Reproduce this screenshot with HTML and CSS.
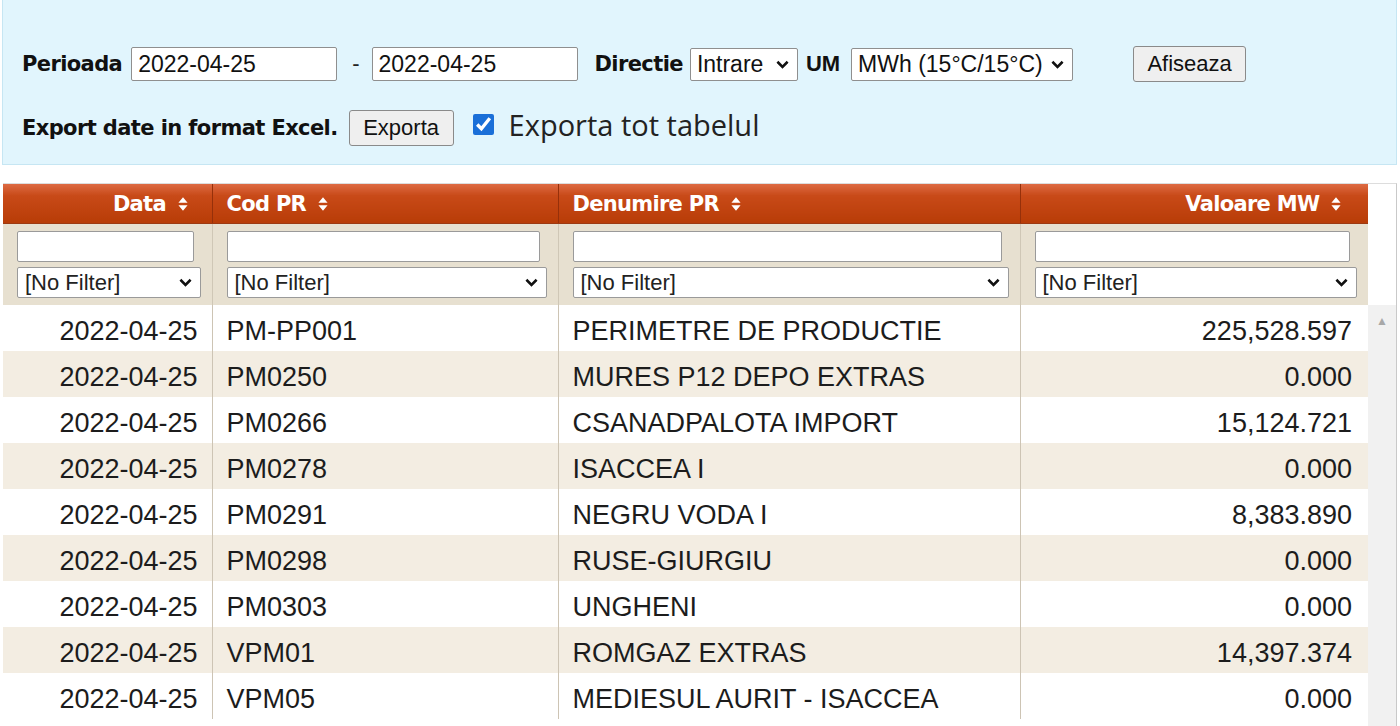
FILE: index.html
```html
<!DOCTYPE html>
<html lang="ro">
<head>
    <meta charset="UTF-8">
    <meta name="viewport" content="width=device-width, initial-scale=1.0">
    <title>Puncte de intrare</title>
    <link rel="stylesheet" href="styles.css">
</head>
<body>

    <div class="panel">
        <div class="panel-row">
            <label class="lbl">Perioada</label>
            <input type="text" class="date" value="2022-04-25">
            <span class="dash">-</span>
            <input type="text" class="date" value="2022-04-25">
            <label class="lbl lbl-dir">Directie</label>
            <select class="sel sel-dir">
                <option>Intrare</option>
                <option>Iesire</option>
            </select>
            <label class="lbl lbl-um">UM</label>
            <select class="sel sel-um">
                <option>MWh (15°C/15°C)</option>
                <option>mc</option>
            </select>
            <button class="btn btn-show">Afiseaza</button>
        </div>
        <div class="panel-row">
            <label class="lbl">Export date in format Excel.</label>
            <button class="btn btn-export">Exporta</button>
            <input type="checkbox" class="chk" id="all" checked>
            <label for="all" class="chk-text">Exporta tot tabelul</label>
        </div>
    </div>

    <div class="grid">
        <table class="grid-head">
            <colgroup>
                <col class="c1"><col class="c2"><col class="c3"><col class="c4">
            </colgroup>
            <tr class="titles">
                <th class="num">Data <svg class="sort" viewBox="0 0 10 14"><path d="M5 1 9 6H1zM5 13 1 8h8z"/></svg></th>
                <th>Cod PR <svg class="sort" viewBox="0 0 10 14"><path d="M5 1 9 6H1zM5 13 1 8h8z"/></svg></th>
                <th>Denumire PR <svg class="sort" viewBox="0 0 10 14"><path d="M5 1 9 6H1zM5 13 1 8h8z"/></svg></th>
                <th class="num">Valoare MW <svg class="sort" viewBox="0 0 10 14"><path d="M5 1 9 6H1zM5 13 1 8h8z"/></svg></th>
            </tr>
            <tr class="filters">
                <td><input type="text"><select><option>[No Filter]</option></select></td>
                <td><input type="text"><select><option>[No Filter]</option></select></td>
                <td><input type="text"><select><option>[No Filter]</option></select></td>
                <td><input type="text"><select><option>[No Filter]</option></select></td>
            </tr>
        </table>

        <div class="grid-body">
            <table class="rows">
                <colgroup>
                    <col class="c1"><col class="c2"><col class="c3"><col class="c4">
                </colgroup>
                <tbody id="rows"></tbody>
            </table>
            <div class="scrollbar"><span class="up">▲</span></div>
        </div>
    </div>

    <script>
        // date afisate in tabel
        let data = [
            ["2022-04-25", "PM-PP001", "PERIMETRE DE PRODUCTIE", "225,528.597"],
            ["2022-04-25", "PM0250", "MURES P12 DEPO EXTRAS", "0.000"],
            ["2022-04-25", "PM0266", "CSANADPALOTA IMPORT", "15,124.721"],
            ["2022-04-25", "PM0278", "ISACCEA I", "0.000"],
            ["2022-04-25", "PM0291", "NEGRU VODA I", "8,383.890"],
            ["2022-04-25", "PM0298", "RUSE-GIURGIU", "0.000"],
            ["2022-04-25", "PM0303", "UNGHENI", "0.000"],
            ["2022-04-25", "VPM01", "ROMGAZ EXTRAS", "14,397.374"],
            ["2022-04-25", "VPM05", "MEDIESUL AURIT - ISACCEA", "0.000"]
        ];

        let tbody = document.getElementById("rows");
        data.forEach(function(r, i) {
            let tr = document.createElement("tr");
            if (i % 2 === 1) tr.className = "alt";
            tr.innerHTML =
                `<td class="num">${r[0]}</td><td>${r[1]}</td><td>${r[2]}</td><td class="num">${r[3]}</td>`;
            tbody.appendChild(tr);
        });
    </script>
</body>
</html>
```

FILE: styles.css
```css
body {
    margin: 0;
    padding: 0 3px 0 2px;
    font-family: "Liberation Sans", Arial, sans-serif;
    color: #222;
    overflow: hidden;
}

/* panoul de filtre de sus */
.panel {
    background: #e1f5fd;
    border: 1px solid #c6e6f3;
    border-top: none;
    padding: 46px 19px 18px;
}

.panel-row {
    display: flex;
    align-items: center;
    height: 36px;
}

.panel-row + .panel-row {
    margin-top: 28px;
}

.lbl {
    font-family: "DejaVu Sans", Verdana, sans-serif;
    font-weight: bold;
    font-size: 21px;
    color: #111;
    letter-spacing: -0.6px;
    margin-right: 9px;
}

.lbl-dir {
    margin-left: 17px;
    margin-right: 7px;
}

.lbl-um {
    font-family: "Liberation Sans", Arial, sans-serif;
    font-size: 22px;
    letter-spacing: 0;
    margin-right: 11px;
}

.date {
    width: 206px;
    height: 34px;
    box-sizing: border-box;
    border: 1px solid #8f8f8f;
    border-radius: 2px;
    padding: 0 6px;
    font-family: "Liberation Sans", Arial, sans-serif;
    font-size: 23px;
    color: #111;
    background: #fff;
}

.dash {
    font-size: 22px;
    margin: 0 12px 0 15px;
}

/* select cu sageata desenata */
select {
    appearance: none;
    background: #fff url("data:image/svg+xml,%3Csvg xmlns='http://www.w3.org/2000/svg' viewBox='0 0 14 9'%3E%3Cpath d='M1.5 1.5 7 7l5.5-5.5' fill='none' stroke='%23111' stroke-width='2.8'/%3E%3C/svg%3E") no-repeat right 8px center / 13px 9px;
}

.sel {
    height: 33px;
    box-sizing: border-box;
    border: 1px solid #8f8f8f;
    border-radius: 2px;
    padding: 0 0 0 6px;
    font-family: "Liberation Sans", Arial, sans-serif;
    font-size: 23px;
    color: #111;
    margin-right: 8px;
}

.sel-dir {
    width: 108px;
}

.sel-um {
    width: 222px;
}

.btn {
    height: 36px;
    border: 1px solid #8a8a8a;
    border-radius: 3px;
    background: #efefef;
    font-family: "Liberation Sans", Arial, sans-serif;
    font-size: 22px;
    color: #111;
    padding: 0 10px;
}

.btn-show {
    margin-left: 52px;
    width: 113px;
}

.btn-export {
    width: 105px;
    margin-left: 2px;
}

.chk {
    width: 21px;
    height: 21px;
    margin: 0 15px 8px 19px;
    accent-color: #1a6fd8;
}

.chk-text {
    font-family: "Open Sans", "Liberation Sans", sans-serif;
    font-size: 29px;
    color: #222;
    margin-top: -8px;
}

/* tabelul */
.grid {
    margin-top: 18px;
    margin-left: 1px;
    border-top: 1px solid #ddd;
    border-right: 1px solid #c9c9c9;
}

.grid table {
    table-layout: fixed;
    border-collapse: collapse;
    width: 1365px;
}

.c1 { width: 209px; }
.c2 { width: 346px; }
.c3 { width: 462px; }
.c4 { width: 348px; }

.titles th {
    height: 39px;
    padding: 0 14px;
    background: linear-gradient(#dd6a43, #c84a18 30%, #b83c07);
    color: #fff;
    font-family: "DejaVu Sans", Verdana, sans-serif;
    font-size: 21px;
    letter-spacing: -0.7px;
    text-align: left;
    border-left: 1px solid #96300a;
    border-bottom: 1px solid #9c3a12;
}

.titles th:first-child {
    border-left: none;
}

.grid th.num {
    text-align: right;
    padding-right: 26px;
}

.grid th.num:first-child {
    padding-right: 23px;
}

.sort {
    width: 12px;
    height: 16px;
    fill: #fff;
    margin-left: 4px;
    vertical-align: -1px;
}

.filters td {
    background: #e7e0d0;
    padding: 7px 0 7px 14px;
    border-left: 1px solid #cfc7b6;
}

.filters td:first-child {
    border-left: none;
}

.filters input {
    display: block;
    width: calc(100% - 18px);
    height: 31px;
    box-sizing: border-box;
    border: 1px solid #9a9a9a;
    border-radius: 2px;
    background: #fff;
    margin-bottom: 5px;
}

.filters select {
    display: block;
    width: calc(100% - 11px);
    height: 31px;
    box-sizing: border-box;
    border: 1px solid #9a9a9a;
    border-radius: 2px;
    padding-left: 7px;
    font-family: "Liberation Sans", Arial, sans-serif;
    font-size: 22px;
    color: #222;
}

.grid-body {
    display: flex;
    height: 430px;
}

.rows {
    align-self: flex-start;
}

.rows td {
    height: 40px;
    padding: 6px 14px 0 14px;
    font-size: 27px;
    color: #1c1c1c;
    border-left: 1px solid #cdc4b4;
    white-space: nowrap;
}

.rows td:first-child {
    border-left: none;
}

.rows tr.alt td {
    background: #f3ede2;
}

.rows td.num {
    text-align: right;
    padding-right: 16px;
}

.rows td.num:first-child {
    padding-right: 14px;
}

.scrollbar {
    width: 29px;
    background: #f1f1f1;
    text-align: center;
}

.up {
    display: block;
    font-size: 12px;
    color: #a8a8a8;
    margin-top: 9px;
}
```
